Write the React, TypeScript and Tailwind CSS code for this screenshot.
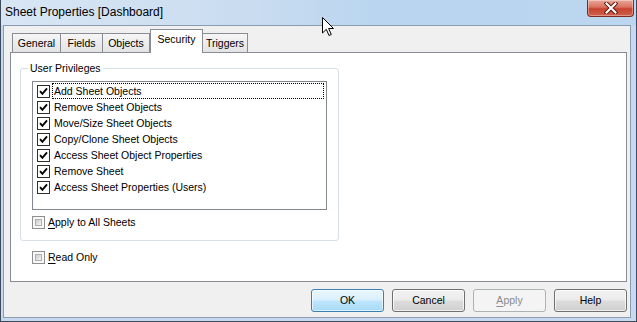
import React from "react"

const items = [
  "Add Sheet Objects",
  "Remove Sheet Objects",
  "Move/Size Sheet Objects",
  "Copy/Clone Sheet Objects",
  "Access Sheet Object Properties",
  "Remove Sheet",
  "Access Sheet Properties (Users)",
]

function CheckMark() {
  return (
    <svg width="9" height="9" viewBox="0 0 9 9">
      <path d="M1 4.2 L3.4 6.8 L8 1.4" fill="none" stroke="#000" strokeWidth="1.9" />
    </svg>
  )
}

// flat checkbox used inside the list
function ListCheck() {
  return (
    <div className="w-[13px] h-[13px] shrink-0 border border-[#2e2e2e] bg-white flex items-center justify-center">
      <CheckMark />
    </div>
  )
}

// win7 style empty checkbox
function EmptyCheck() {
  return (
    <div className="w-[13px] h-[13px] shrink-0 border border-[#8e8f8f] bg-[#f8f8f8] p-[2px]">
      <div className="w-full h-full border border-[#b0b0b0] bg-[linear-gradient(135deg,#cbcbcb,#f4f4f4)]" />
    </div>
  )
}

function Button({ children, kind }: { children: React.ReactNode; kind?: "default" | "disabled" }) {
  let cls =
    "border-[#707070] bg-[linear-gradient(#f2f2f2_0%,#ebebeb_48%,#dddddd_52%,#cfcfcf_100%)] text-black shadow-[inset_0_0_0_1px_rgba(255,255,255,0.7)]"
  if (kind === "default")
    cls =
      "border-[#3c7fb1] bg-[linear-gradient(#eaf6fd_0%,#d9f0fc_48%,#bee6fd_52%,#a7d9f5_100%)] text-black shadow-[inset_0_0_0_1px_rgba(255,255,255,0.6)]"
  if (kind === "disabled") cls = "border-[#adb2b5] bg-[#f4f4f4] text-[#8a8a8a]"
  return (
    <div className={`w-[73px] h-[23px] rounded-[3px] border flex items-center justify-center ${cls}`}>
      {children}
    </div>
  )
}

export default function App() {
  return (
    <div className="relative w-[637px] h-[322px] overflow-hidden flex flex-col bg-[#c6d9ee] border-x border-b border-[#3d4b5c] font-['Liberation_Sans',Arial,sans-serif] text-[10.5px] text-black">
      {/* Title bar */}
      <div className="h-[25px] shrink-0 flex items-start justify-between bg-[linear-gradient(90deg,#d8e6f4_0%,#c9dcf0_40%,#b9d5ef_60%,#bcd6f0_100%)]">
        <div className="pl-[4px] pt-[3px] text-[12px] text-black">Sheet Properties [Dashboard]</div>
        <div className="mr-[2px] w-[47px] h-[17px] rounded-b-[4px] border border-t-0 border-[#7e2a20] bg-[linear-gradient(#e9a99b_0%,#d9705e_45%,#c7432e_55%,#d0604c_100%)] shadow-[inset_0_0_0_1px_rgba(255,255,255,0.35)] flex items-center justify-center">
          <svg width="14" height="12" viewBox="0 0 14 12">
            <path d="M2.5 1.5 L11.5 10.5 M11.5 1.5 L2.5 10.5" stroke="#5a1a12" strokeWidth="4" strokeLinecap="square" />
            <path d="M2.5 1.5 L11.5 10.5 M11.5 1.5 L2.5 10.5" stroke="#fff" strokeWidth="2" strokeLinecap="square" />
          </svg>
        </div>
      </div>

      {/* Client area */}
      <div className="flex-1 ml-[2px] mr-[5px] mb-[3px] border border-[#8b9bb0] bg-[#f0f0f0] flex flex-col">
        {/* Tabs */}
        <div className="relative z-10 flex items-end h-[23px] mt-[3px] pl-[8px]">
          <div className="w-[49px] h-[19px] border border-b-0 border-[#898c95] bg-[linear-gradient(#f6f6f6,#e3e3e3)] flex items-center justify-center pt-[2px]">General</div>
          <div className="w-[42px] h-[19px] border border-b-0 border-l-0 border-[#898c95] bg-[linear-gradient(#f6f6f6,#e3e3e3)] flex items-center justify-center pt-[2px]">Fields</div>
          <div className="w-[47px] h-[19px] border border-b-0 border-l-0 border-[#898c95] bg-[linear-gradient(#f6f6f6,#e3e3e3)] flex items-center justify-center pt-[2px]">Objects</div>
          <div className="w-[53px] h-[24px] -mb-px border border-b-0 border-[#898c95] bg-white flex items-center justify-center pb-[3px]">Security</div>
          <div className="w-[45px] h-[19px] border border-b-0 border-l-0 border-[#898c95] bg-[linear-gradient(#f6f6f6,#e3e3e3)] flex items-center justify-center pt-[2px]">Triggers</div>
        </div>

        {/* Tab panel */}
        <div className="ml-[6px] w-[617px] h-[230px] shrink-0 border border-[#898c95] bg-white pt-[15px] pl-[9px]">
          <div className="relative w-[319px] h-[173px] border border-[#d5dfe5] rounded-[3px] pt-[12px] pl-[11px]">
            <span className="absolute left-[7px] -top-[8px] px-[2px] bg-white leading-[14px]">User Privileges</span>

            <div className="w-[295px] h-[129px] border border-[#828790] p-px flex flex-col">
              {items.map((item, i) => (
                <div key={item} className="h-[16px] flex items-center pl-[3px] pr-px">
                  <ListCheck />
                  <div
                    className={`ml-[2px] flex-1 h-[16px] flex items-center px-px pt-px border border-dotted ${
                      i === 0 ? "border-black" : "border-transparent"
                    }`}
                  >
                    {item}
                  </div>
                </div>
              ))}
            </div>

            <div className="mt-[6px] flex items-center h-[13px]">
              <EmptyCheck />
              <span className="ml-[3px] pt-px">
                <span className="underline underline-offset-2">A</span>pply to All Sheets
              </span>
            </div>
          </div>

          <div className="mt-[10px] ml-[12px] flex items-center h-[13px]">
            <EmptyCheck />
            <span className="ml-[3px] pt-px">
              <span className="underline underline-offset-2">R</span>ead Only
            </span>
          </div>
        </div>

        {/* Buttons */}
        <div className="mt-[7px] flex justify-end gap-[8px] pr-[3px]">
          <Button kind="default">OK</Button>
          <Button>Cancel</Button>
          <Button kind="disabled">
            <span>
              <span className="underline underline-offset-2">A</span>pply
            </span>
          </Button>
          <Button>Help</Button>
        </div>
      </div>

      {/* mouse pointer */}
      <svg className="absolute left-[321px] top-[17px]" width="13" height="20" viewBox="0 0 13 20">
        <path d="M0.5 0.5 L0.5 16 L4.3 12.3 L7 18.5 L9.3 17.5 L6.6 11.5 L11.5 11.5 Z" fill="#fff" stroke="#000" strokeWidth="1" strokeLinejoin="miter" />
      </svg>
    </div>
  )
}
